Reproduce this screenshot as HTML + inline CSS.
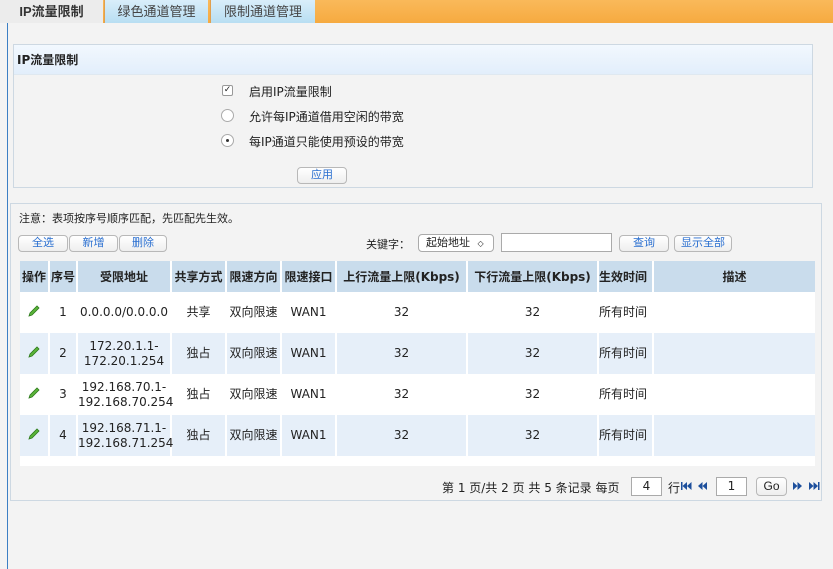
<!DOCTYPE html>
<html><head><meta charset="utf-8"><style>
*{margin:0;padding:0;box-sizing:border-box}
body{width:833px;height:569px;background:#f3f3f3;font-family:"DejaVu Sans","Noto Sans CJK SC",sans-serif;font-size:12px;color:#222;position:relative;overflow:hidden}
.a{position:absolute}
.tab{position:absolute;top:0;height:23px;line-height:23px;text-align:center;font-size:13px;font-family:"Liberation Sans","Noto Sans CJK SC",sans-serif}
.btn{position:absolute;height:17px;border:1px solid #b8b8b8;border-radius:4px;background:linear-gradient(#fff,#eee);color:#2a6fd0;font-size:11px;text-align:center;line-height:15px;font-family:"Liberation Sans","Noto Sans CJK SC",sans-serif}
table{border-collapse:collapse;position:absolute;left:20px;top:261px;width:795px;table-layout:fixed}
th{background:#c9dcec;height:31px;font-size:12px;border-right:2px solid #fff;font-weight:bold;white-space:nowrap;overflow:hidden}
td{height:41px;text-align:center;border-right:2px solid #fff;font-size:12px;line-height:15px;white-space:nowrap}
tr.e td{background:#e6eff9}
tr.o td{background:#fff}
.pen{display:inline-block;width:14px;height:14px}
</style></head><body>
<div class="a" style="left:0;top:0;width:833px;height:23px;background:linear-gradient(#f9b95a,#f6aa40)"></div>
<div class="tab" style="left:0;width:103px;background:#ececec;font-weight:bold;color:#333">IP流量限制</div>
<div class="tab" style="left:104px;width:104px;background:linear-gradient(#d9eefa,#b8def2);color:#444;border-left:1px solid #e0a050">绿色通道管理</div>
<div class="tab" style="left:210px;width:105px;background:linear-gradient(#d9eefa,#b8def2);color:#444;border-left:1px solid #e0a050">限制通道管理</div>
<div class="a" style="left:7px;top:23px;width:1px;height:546px;background:#3c7fc4"></div>

<div class="a" style="left:13px;top:44px;width:800px;height:144px;border:1px solid #cdd8e2;background:#f3f3f3"></div>
<div class="a" style="left:14px;top:45px;width:798px;height:30px;background:linear-gradient(#f2f8fe,#e2eefb);font-weight:bold;font-size:12px;line-height:30px;padding-left:3px;border-bottom:1px solid #dfe8f0">IP流量限制</div>
<div class="a" style="left:222px;top:85px;width:11px;height:11px;border:1px solid #999;border-radius:2px;background:#fff;font-size:9px;line-height:9px;text-align:center">✓</div>
<div class="a" style="left:249px;top:83px">启用IP流量限制</div>
<div class="a" style="left:221px;top:109px;width:13px;height:13px;border:1px solid #aaa;border-radius:50%;background:#fff"></div>
<div class="a" style="left:249px;top:108px">允许每IP通道借用空闲的带宽</div>
<div class="a" style="left:221px;top:134px;width:13px;height:13px;border:1px solid #aaa;border-radius:50%;background:#fff"><div class="a" style="left:4px;top:4px;width:3px;height:3px;background:#333;border-radius:50%"></div></div>
<div class="a" style="left:249px;top:133px">每IP通道只能使用预设的带宽</div>
<div class="btn" style="left:297px;top:167px;width:50px">应用</div>

<div class="a" style="left:10px;top:203px;width:812px;height:298px;border:1px solid #cdd8e2;background:#f3f3f3"></div>
<div class="a" style="left:19px;top:210px;font-size:11px">注意：表项按序号顺序匹配，先匹配先生效。</div>
<div class="btn" style="left:18px;top:235px;width:50px">全选</div>
<div class="btn" style="left:69px;top:235px;width:49px">新增</div>
<div class="btn" style="left:119px;top:235px;width:48px">删除</div>
<div class="a" style="left:366px;top:236px;font-size:11px">关键字：</div>
<div class="a" style="left:418px;top:234px;width:76px;height:18px;border:1px solid #aaa;border-radius:4px;background:#fff;font-size:11px;line-height:16px;padding-left:7px">起始地址 <span style="font-size:8px;margin-left:4px">◇</span></div>
<div class="a" style="left:501px;top:233px;width:111px;height:19px;border:1px solid #aaa;background:#fff"></div>
<div class="btn" style="left:619px;top:235px;width:50px">查询</div>
<div class="btn" style="left:674px;top:235px;width:58px">显示全部</div>

<div class="a" style="left:20px;top:261px;width:795px;height:205px;background:#fff"></div>
<table>
<colgroup><col style="width:29px"><col style="width:28px"><col style="width:94px"><col style="width:55px"><col style="width:55px"><col style="width:55px"><col style="width:131px"><col style="width:131px"><col style="width:55px"><col style="width:162px"></colgroup>
<tr><th>操作</th><th>序号</th><th>受限地址</th><th>共享方式</th><th>限速方向</th><th>限速接口</th><th>上行流量上限(Kbps)</th><th>下行流量上限(Kbps)</th><th style="text-align:left">生效时间</th><th style="border:0">描述</th></tr>
<tr class="o"><td><svg class="pen" viewBox="0 0 14 14"><path d="M2 12 L3 9 L10 2 L12 4 L5 11 Z" fill="#5cb53a" stroke="#2d7a1c" stroke-width=".8"/></svg></td><td>1</td><td>0.0.0.0/0.0.0.0</td><td>共享</td><td>双向限速</td><td>WAN1</td><td>32</td><td>32</td><td style="text-align:left">所有时间</td><td style="border:0"></td></tr>
<tr class="e"><td><svg class="pen" viewBox="0 0 14 14"><path d="M2 12 L3 9 L10 2 L12 4 L5 11 Z" fill="#5cb53a" stroke="#2d7a1c" stroke-width=".8"/></svg></td><td>2</td><td>172.20.1.1-<br>172.20.1.254</td><td>独占</td><td>双向限速</td><td>WAN1</td><td>32</td><td>32</td><td style="text-align:left">所有时间</td><td style="border:0"></td></tr>
<tr class="o"><td><svg class="pen" viewBox="0 0 14 14"><path d="M2 12 L3 9 L10 2 L12 4 L5 11 Z" fill="#5cb53a" stroke="#2d7a1c" stroke-width=".8"/></svg></td><td>3</td><td>192.168.70.1-<br>192.168.70.254</td><td>独占</td><td>双向限速</td><td>WAN1</td><td>32</td><td>32</td><td style="text-align:left">所有时间</td><td style="border:0"></td></tr>
<tr class="e"><td><svg class="pen" viewBox="0 0 14 14"><path d="M2 12 L3 9 L10 2 L12 4 L5 11 Z" fill="#5cb53a" stroke="#2d7a1c" stroke-width=".8"/></svg></td><td>4</td><td>192.168.71.1-<br>192.168.71.254</td><td>独占</td><td>双向限速</td><td>WAN1</td><td>32</td><td>32</td><td style="text-align:left">所有时间</td><td style="border:0"></td></tr>
</table>

<div class="a" style="left:442px;top:479px;font-size:12px;white-space:nowrap">第 1 页/共 2 页 共 5 条记录 每页</div>
<div class="a" style="left:631px;top:477px;width:31px;height:19px;border:1px solid #aaa;background:#fff;text-align:center;line-height:17px">4</div>
<div class="a" style="left:668px;top:479px">行</div>
<svg class="a" style="left:681px;top:481px" width="30" height="10" viewBox="0 0 30 10"><g fill="#1d4f9c"><rect x="0" y="1" width="1.5" height="8"/><path d="M1.5 5 L6 1 V9Z M6 5 L10.5 1 V9Z M17 5 L21.5 1 V9Z M21.5 5 L26 1 V9Z"/></g></svg>
<div class="a" style="left:716px;top:477px;width:31px;height:19px;border:1px solid #aaa;background:#fff;text-align:center;line-height:17px">1</div>
<div class="btn" style="left:756px;top:477px;width:31px;height:19px;color:#222;line-height:17px;font-size:12px">Go</div>
<svg class="a" style="left:793px;top:481px" width="30" height="10" viewBox="0 0 30 10"><g fill="#1d4f9c"><path d="M0 1 L4.5 5 L0 9Z M4.5 1 L9 5 L4.5 9Z M16 1 L20.5 5 L16 9Z M20.5 1 L25 5 L20.5 9Z"/><rect x="25" y="1" width="1.5" height="8"/></g></svg>
</body></html>
